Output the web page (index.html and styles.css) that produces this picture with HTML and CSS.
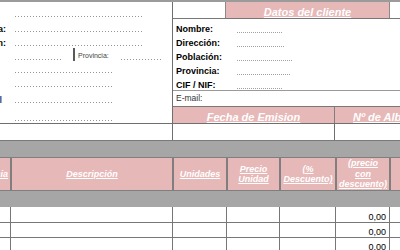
FILE: index.html
```html
<!DOCTYPE html>
<html lang="es">
<head>
    <meta charset="UTF-8">
    <meta name="viewport" content="width=device-width, initial-scale=1.0">
    <title>Albarán</title>
    <link rel="stylesheet" href="styles.css">
</head>
<body>
    <div class="sheet">
        <div class="top">
            <!-- datos del emisor -->
            <div class="issuer">
                <div class="line h15"><span class="tag"></span><span class="dots w127"></span></div>
                <div class="line h15"><span class="tag">Empresa:</span><span class="dots w127"></span></div>
                <div class="line h14"><span class="tag">Dirección:</span><span class="dots w127"></span></div>
                <div class="line h14">
                    <span class="tag"><span class="cp">Código Postal</span></span><span class="dots w46"></span>
                    <span class="bar"></span>
                    <span class="prov">Provincia:</span>
                    <span class="dots w42"></span>
                </div>
                <div class="line h13"><span class="tag"></span><span class="dots w97"></span></div>
                <div class="line h14"><span class="tag"></span><span class="dots w97"></span></div>
                <div class="line h16"><span class="tag"><span class="mail">E-mail</span></span><span class="dots w97"></span></div>
                <div class="line h18"><span class="tag"></span><span class="dots w97"></span></div>
            </div>

            <!-- datos del cliente -->
            <div class="client">
                <div class="client-head">
                    <div class="blank"></div>
                    <div class="title">Datos del cliente</div>
                    <div class="blank"></div>
                </div>
                <div class="fields">
                    <div class="field"><span class="name">Nombre:</span><span class="fine" style="width:45px"></span></div>
                    <div class="field"><span class="name">Dirección:</span><span class="fine" style="width:48px"></span></div>
                    <div class="field"><span class="name">Población:</span><span class="fine" style="width:56px"></span></div>
                    <div class="field"><span class="name">Provincia:</span><span class="fine" style="width:53px"></span></div>
                    <div class="field"><span class="name">CIF / NIF:</span><span class="fine" style="width:45px"></span></div>
                </div>
                <div class="email">E-mail:</div>
                <div class="doc-head">
                    <div class="title">Fecha de Emision</div>
                    <div class="title left">Nº de Albarán</div>
                </div>
            </div>
        </div>

        <div class="doc-values">
            <div></div><div></div><div></div>
        </div>

        <div class="band top-line"></div>

        <div class="head">
            <div class="hcell end">Referencia</div>
            <div class="hcell">Descripción</div>
            <div class="hcell">Unidades</div>
            <div class="hcell">Precio<br>Unidad</div>
            <div class="hcell">(%<br>Descuento)</div>
            <div class="hcell">(precio<br>con<br>descuento)</div>
            <div class="hcell"></div>
        </div>

        <div class="band"></div>

        <div class="data" id="rows"></div>
    </div>

    <script>
        const rows = document.getElementById('rows');
        for (let r = 0; r < 4; r++) {
            for (let c = 0; c < 7; c++) {
                const cell = document.createElement('div');
                cell.className = 'cell';
                if (c === 5) {
                    cell.className = 'cell num';
                    cell.textContent = '0,00';
                }
                rows.appendChild(cell);
            }
        }
    </script>
</body>
</html>
```

FILE: styles.css
```css
* {
    box-sizing: border-box;
}

body {
    margin: 0;
    background: #fff;
    color: #000;
    font-family: "Liberation Sans", Arial, sans-serif;
    overflow: hidden;
}

.sheet {
    width: 400px;
    height: 250px;
    border-top: 2px solid #9b9b9b;
    overflow: hidden;
}

.top {
    display: grid;
    grid-template-columns: 173px 1fr;
    height: 122px;
    border-bottom: 1px solid #6f6f6f;
}

/* emisor */
.issuer {
    border-right: 1px solid #6f6f6f;
    display: flex;
    flex-direction: column;
}

.line {
    display: flex;
    align-items: flex-end;
    flex: none;
}

.h13 { height: 13px; }
.h14 { height: 14px; }
.h15 { height: 15px; }
.h16 { height: 16px; }
.h18 { height: 18px; }

.tag {
    width: 6px;
    flex: none;
    display: flex;
    justify-content: flex-end;
    overflow: hidden;
    white-space: nowrap;
    font-size: 9px;
    font-weight: bold;
    line-height: 11px;
    margin-bottom: -3px;
}

.tag .cp {
    color: #8fd6e8;
    margin-right: 6px;
}

.tag .mail {
    color: #1f3f78;
    margin-right: 4px;
}

.dots {
    height: 1px;
    margin-left: 9px;
    flex: none;
    background: repeating-linear-gradient(to right, #959595 0 1px, transparent 1px 3px);
}

.w127 { width: 127px; }
.w97 { width: 97px; }
.w46 { width: 46px; }
.w42 { width: 42px; margin-left: 12px; }

.bar {
    width: 2px;
    height: 13px;
    margin-left: 12px;
    margin-bottom: -1px;
    background: #5a5a5a;
    flex: none;
}

.prov {
    font-size: 7px;
    line-height: 9px;
    color: #444;
    margin-left: 3px;
    flex: none;
}

/* cliente */
.client {
    display: flex;
    flex-direction: column;
}

.client-head {
    display: grid;
    grid-template-columns: 52px 163px 1fr;
    gap: 1px;
    height: 17px;
    background: #8a8a8a;
    border-bottom: 1px solid #777;
}

.blank {
    background: #fff;
}

.title {
    background: #e6b8b7;
    color: #fff;
    font-size: 11px;
    font-weight: bold;
    font-style: italic;
    text-decoration: underline;
    line-height: 13px;
    display: flex;
    justify-content: center;
    align-items: center;
    padding-top: 4px;
    white-space: nowrap;
    overflow: hidden;
}

.title.left {
    justify-content: flex-start;
    padding-left: 18px;
}

.fields {
    height: 72px;
    padding-top: 3px;
    border-bottom: 1px solid #9a9a9a;
}

.field {
    height: 14px;
    display: flex;
    align-items: center;
    padding-left: 3px;
}

.name {
    width: 61px;
    flex: none;
    font-size: 9px;
    font-weight: bold;
    line-height: 14px;
}

.fine {
    align-self: flex-end;
    height: 1px;
    margin-bottom: 3px;
    background: repeating-linear-gradient(to right, #a0a0a0 0 1px, transparent 1px 2px);
}

.email {
    height: 16px;
    border-bottom: 1px solid #777;
    padding-left: 3px;
    font-size: 8.5px;
    line-height: 15px;
    color: #333;
}

.doc-head {
    display: grid;
    grid-template-columns: 161px 1fr;
    gap: 1px;
    height: 16px;
    background: #7f7f7f;
}

.doc-values {
    display: grid;
    grid-template-columns: 172px 161px 1fr;
    gap: 1px;
    height: 16px;
    background: #6f6f6f;
}

.doc-values div {
    background: #fff;
}

/* tabla de lineas */
.band {
    height: 16px;
    background: #a6a6a6;
}

.band.top-line {
    height: 17px;
    border-top: 1px solid #7a7a7a;
}

.head {
    display: grid;
    grid-template-columns: 10px 160px 52px 51px 54px 52px 1fr;
    gap: 2px;
    height: 34px;
    background: #7f7f7f;
    border-top: 1px solid #7f7f7f;
    border-bottom: 1px solid #7f7f7f;
}

.hcell {
    background: #e6b8b7;
    color: #fff;
    font-size: 9px;
    font-weight: bold;
    font-style: italic;
    text-decoration: underline;
    line-height: 10.5px;
    text-align: center;
    display: flex;
    align-items: center;
    justify-content: center;
    white-space: nowrap;
    overflow: hidden;
}

.hcell.end {
    justify-content: flex-end;
    padding-right: 2px;
}

.data {
    display: grid;
    grid-template-columns: 10px 161px 53px 52px 55px 53px 1fr;
    grid-template-rows: 15px 14px 14px 14px;
    gap: 1px;
    background: #777;
}

.cell {
    background: #fff;
}

.num {
    display: flex;
    align-items: flex-end;
    justify-content: flex-end;
    padding-right: 3px;
    font-size: 9px;
    line-height: 9px;
    padding-bottom: 0;
}
```
